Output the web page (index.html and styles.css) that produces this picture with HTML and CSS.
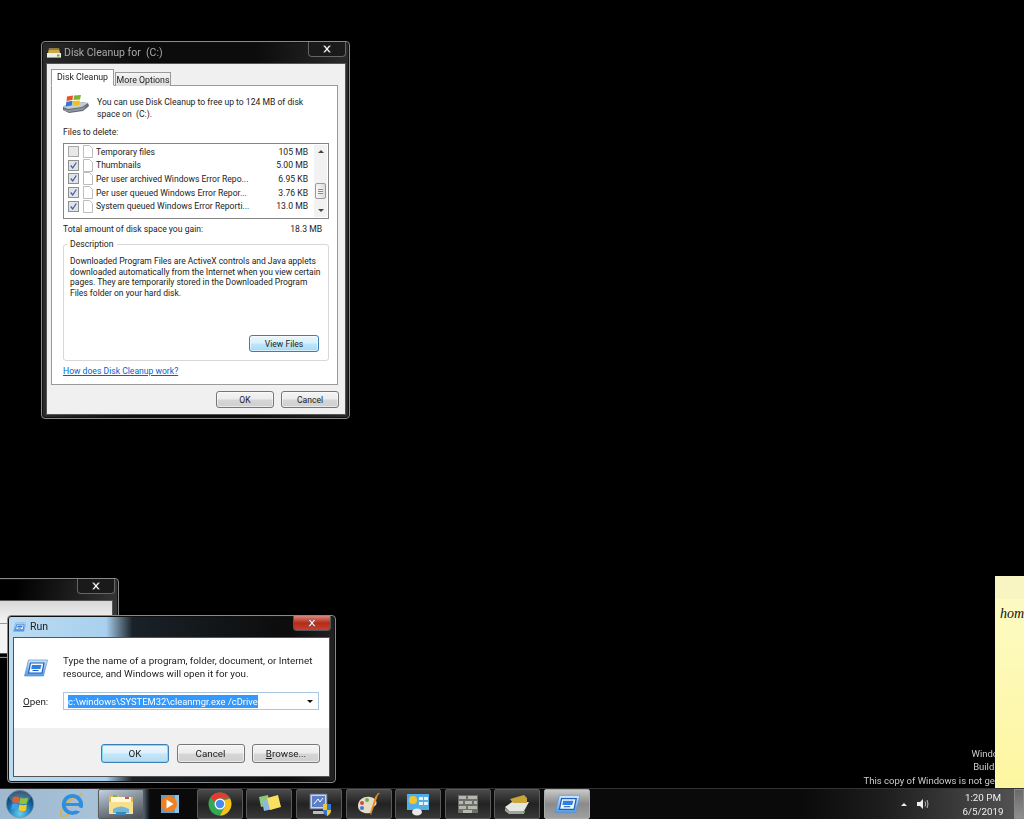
FILE: index.html
```html
<!DOCTYPE html>
<html lang="en">
<head>
<meta charset="utf-8">
<title>Windows 7 desktop</title>
<link rel="stylesheet" href="styles.css">
</head>
<body>
<svg class="defs" width="0" height="0" aria-hidden="true">
  <defs>
    <linearGradient id="runG" x1="0" y1="0" x2="0" y2="1"><stop offset="0" stop-color="#cfe6fb"/><stop offset="1" stop-color="#4f9be6"/></linearGradient>
    <symbol id="run-icon" viewBox="0 0 24 18">
      <path d="M5 1H24L20 17H1Z" fill="url(#runG)" stroke="#5f93c9" stroke-width=".7"/>
      <path d="M7 4H20.5L18.5 14H5Z" fill="#f4f9ff" stroke="#1f5fb8" stroke-width="1.2"/>
      <path d="M8.5 6H18L16.8 10H7.7Z" fill="#2f7fe0"/>
      <path d="M9 11.5H15" stroke="#1f5fb8"/>
    </symbol>
    <symbol id="close-x" viewBox="0 0 10 8">
      <path d="M1 .5H3L5 2.7 7 .5H9L6 4 9 7.5H7L5 5.3 3 7.5H1L4 4Z" fill="#fff" stroke="#333" stroke-width=".4"/>
    </symbol>
    <symbol id="file" viewBox="0 0 10 13">
      <path d="M.5.5H6.5L9.5 3.5V12.5H.5Z" fill="#fff" stroke="#bcbcbc"/>
    </symbol>
    <symbol id="check" viewBox="0 0 11 11">
      <rect x=".5" y=".5" width="10" height="10" fill="#dfe3ea" stroke="#8e8f8f"/>
      <path d="M2.7 5.5 4.7 8 8.3 2.5" fill="none" stroke="#4a5f97" stroke-width="1.3"/>
    </symbol>
  </defs>
</svg>

<main class="desktop">
  <section class="window window-back">
    <div class="titlebar"><span class="close close-dark close-back"><svg class="x"><use href="#close-x"/></svg></span></div>
    <div class="client back-client"></div>
  </section>

  <section class="window window-disk">
    <header class="titlebar">
      <svg class="title-icon" viewBox="0 0 14 12">
        <path d="M2 1H12L13 6H1Z" fill="#c9a94a"/>
        <path d="M2 1H12V3H2Z" fill="#8a7a3c"/>
        <path d="M0 6H14V11H0Z" fill="#eeeee8"/>
        <path d="M0 10H14V11H0Z" fill="#9a9a94"/>
        <path d="M10 7.500H12.500V9.500H10Z" fill="#5fb04a"/>
      </svg>
      <h1 class="title">Disk Cleanup for  (C:)</h1>
      <span class="close close-dark"><svg class="x"><use href="#close-x"/></svg></span>
    </header>
    <div class="client disk-client">
      <nav class="tabs">
        <span class="tab tab-active">Disk Cleanup</span>
        <span class="tab">More Options</span>
      </nav>
      <div class="panel">
        <div class="intro">
          <svg class="drive" viewBox="0 0 26 18">
            <path d="M0 12 8 6 25 8 26 11 20 16 6 18 0 15Z" fill="#5f6870"/>
            <path d="M0 12 8 6 25 8 19 12 5 14Z" fill="#c4ccd2"/>
            <path d="M1 14 5 15 19 13 24 10 20 15 6 17 1 15.500Z" fill="#8d969e"/>
            <path d="M4 1.500 10 .5 9.500 5 3.500 6Z" fill="#e2562a"/>
            <path d="M11 .5 18 0 17 4.500 10.500 5Z" fill="#7cb530"/>
            <path d="M3.300 6.800 9.300 6 8.800 10.500 2.800 11.500Z" fill="#2f78d8"/>
            <path d="M10.300 6 17 5.500 16 10 9.800 10.500Z" fill="#f0c020"/>
          </svg>
          <p class="intro-text">You can use Disk Cleanup to free up to 124 MB of disk<br>space on  (C:).</p>
        </div>
        <div class="label-files">Files to delete:</div>
        <div class="listbox">
          <ul class="rows">
            <li class="row"><span class="box-empty"></span><svg class="file"><use href="#file"/></svg><span class="row-name">Temporary files</span><span class="row-size">105 MB</span></li>
            <li class="row"><svg class="box"><use href="#check"/></svg><svg class="file"><use href="#file"/></svg><span class="row-name">Thumbnails</span><span class="row-size">5.00 MB</span></li>
            <li class="row"><svg class="box"><use href="#check"/></svg><svg class="file"><use href="#file"/></svg><span class="row-name">Per user archived Windows Error Repo...</span><span class="row-size">6.95 KB</span></li>
            <li class="row"><svg class="box"><use href="#check"/></svg><svg class="file"><use href="#file"/></svg><span class="row-name">Per user queued Windows Error Repor...</span><span class="row-size">3.76 KB</span></li>
            <li class="row"><svg class="box"><use href="#check"/></svg><svg class="file"><use href="#file"/></svg><span class="row-name">System queued Windows Error Reporti...</span><span class="row-size">13.0 MB</span></li>
          </ul>
          <div class="scrollbar">
            <span class="arrow-up"></span>
            <span class="thumb"></span>
            <span class="arrow-down"></span>
          </div>
        </div>
        <div class="total"><span>Total amount of disk space you gain:</span><span>18.3 MB</span></div>
        <fieldset class="group">
          <legend class="legend">Description</legend>
          <p class="desc">Downloaded Program Files are ActiveX controls and Java applets<br>downloaded automatically from the Internet when you view certain<br>pages. They are temporarily stored in the Downloaded Program<br>Files folder on your hard disk.</p>
          <div class="group-foot"><button class="btn btn-focus btn-view">View Files</button></div>
        </fieldset>
        <a class="link" href="#">How does Disk Cleanup work?</a>
      </div>
      <div class="actions disk-actions">
        <button class="btn btn-disk">OK</button>
        <button class="btn btn-disk">Cancel</button>
      </div>
    </div>
  </section>

  <section class="window window-run">
    <header class="titlebar titlebar-run">
      <svg class="run-title-icon"><use href="#run-icon"/></svg>
      <h1 class="title title-run">Run</h1>
      <span class="close close-red"><svg class="x"><use href="#close-x"/></svg></span>
    </header>
    <div class="client run-client">
      <div class="run-body">
        <div class="run-intro">
          <svg class="run-icon"><use href="#run-icon"/></svg>
          <p class="run-text">Type the name of a program, folder, document, or Internet<br>resource, and Windows will open it for you.</p>
        </div>
        <div class="run-open">
          <label class="run-label"><u>O</u>pen:</label>
          <div class="combo"><span class="combo-text">c:\windows\SYSTEM32\cleanmgr.exe /cDrive</span><span class="combo-arrow"></span></div>
        </div>
      </div>
      <div class="actions run-actions">
        <button class="btn btn-run btn-focus-soft">OK</button>
        <button class="btn btn-run">Cancel</button>
        <button class="btn btn-run"><u>B</u>rowse...</button>
      </div>
    </div>
  </section>

  <div class="watermark">
    <div>Windows 7</div>
    <div>Build 7601</div>
    <div>This copy of Windows is not genuine</div>
  </div>

  <aside class="sticky">
    <div class="sticky-head"></div>
    <div class="sticky-body">hom</div>
  </aside>
</main>

<footer class="taskbar">
  <svg class="orb" viewBox="0 0 30 30">
    <defs><radialGradient id="orbG" cx=".5" cy=".85" r=".8"><stop offset="0" stop-color="#63d0f2"/><stop offset=".55" stop-color="#1670ae"/><stop offset="1" stop-color="#0c2f52"/></radialGradient></defs>
    <circle cx="15" cy="15" r="13.700" fill="url(#orbG)" stroke="#7e97ad" stroke-width=".6"/>
    <ellipse cx="15" cy="8" rx="11" ry="6.500" fill="#fff" opacity=".2"/>
    <path d="M8 8.500Q11 6.500 14.300 8.500L13.500 14Q10.500 12.500 7.300 14Z" fill="#ea5a2c"/>
    <path d="M15.300 8.800Q19 10.500 23 8.500L22 14.500Q18 16 14.500 14.500Z" fill="#8cc33f"/>
    <path d="M7 15Q10 13.500 13.300 15.200L12.500 20.800Q9.500 19 6.300 20.500Z" fill="#3ba0e6"/>
    <path d="M14.300 15.500Q18 17 21.800 15.500L21 21.500Q17 23 13.500 21Z" fill="#f8c824"/>
  </svg>
  <svg class="ie" viewBox="0 0 28 28">
    <path d="M24 2C26 5 20 4 13 9 5 15 1 23 4 26 7 27 11 24 12 23" fill="none" stroke="#e8b030" stroke-width="1.6"/>
    <circle cx="15" cy="14" r="9" fill="none" stroke="#2f8fdc" stroke-width="4"/>
    <path d="M8 14H23" stroke="#2f8fdc" stroke-width="3"/>
    <path d="M19 18 25 20" stroke="#a8c2d8" stroke-width="4"/>
  </svg>
  <button class="task task-hot">
    <svg class="task-icon" viewBox="0 0 26 24">
      <path d="M1 3H10L12 5H25V21H1Z" fill="#e2b94a"/>
      <path d="M3 5H23V10H3Z" fill="#fff8d8"/>
      <path d="M5 3H9V5H5Z" fill="#7fb24a"/><path d="M17 5H21V7H17Z" fill="#d9534a"/>
      <path d="M1 10H25V22H1Z" fill="#f7e08c"/>
      <path d="M5 17Q13 12 21 17V21H5Z" fill="#6fb6dc"/><path d="M8 20H18V23H8Z" fill="#3d86b6"/>
    </svg>
  </button>
  <span class="task task-plain">
    <svg class="task-icon" viewBox="0 0 24 24">
      <path d="M3 3H21V21H3Z" fill="#5d9fc9"/><path d="M17 3H21V21H17Z" fill="#8fc3df"/>
      <circle cx="11" cy="12" r="8" fill="#f08020"/><path d="M8.500 7.500 15.500 12 8.500 16.500Z" fill="#fff"/>
    </svg>
  </span>
  <button class="task">
    <svg class="task-icon task-chrome" viewBox="0 0 24 24">
      <circle cx="12" cy="12" r="11.500" fill="#34a853"/>
      <path d="M12 .5A11.500 11.500 0 0 1 22 6.500H12A5.500 5.500 0 0 0 6.800 10L2.500 5.500A11.500 11.500 0 0 1 12 .5Z" fill="#e53b30"/>
      <path d="M22 6.500A11.500 11.500 0 0 1 12 23.500L17 14.500A5.500 5.500 0 0 0 16 8.500Z" fill="#fbc116"/>
      <circle cx="12" cy="12" r="5.500" fill="#fff"/><circle cx="12" cy="12" r="4.200" fill="#4a8bf0"/>
    </svg>
  </button>
  <button class="task">
    <svg class="task-icon" viewBox="0 0 26 24">
      <path d="M3 5 12 3 14 13 5 15Z" fill="#8cc77a"/>
      <path d="M6 9 15 7 17 17 8 19Z" fill="#8fb8e0"/>
      <path d="M11 6 22 3 25 15 14 18Z" fill="#f8e060"/>
    </svg>
  </button>
  <button class="task">
    <svg class="task-icon" viewBox="0 0 26 24">
      <path d="M4 2H21V17H4Z" fill="#c9d4e8" stroke="#58627a"/><path d="M6 4H19V15H6Z" fill="#5d7fc7"/><path d="M8 12 12 7 14 10 17 6" fill="none" stroke="#fff"/>
      <path d="M7 19H18V22H7Z" fill="#b8bcc4"/>
      <path d="M17 12H25V18Q25 22 21 24 17 22 17 18Z" fill="#2f78d8"/><path d="M17 12H21V18H17ZM21 18H25Q25 22 21 24Z" fill="#f4c430"/>
    </svg>
  </button>
  <button class="task">
    <svg class="task-icon" viewBox="0 0 26 24">
      <path d="M2 14C2 7 9 4 14 5 21 6 22 12 19 14 16 15 16 17 16 19 15 23 2 22 2 14Z" fill="#e6dcc8"/>
      <circle cx="6" cy="11" r="2" fill="#d9483a"/><circle cx="11" cy="8" r="2" fill="#6ab04a"/><circle cx="6" cy="16" r="2" fill="#3c7fd0"/>
      <path d="M24 1 22 3 15 23 14 21 19 5 22 1Z" fill="#e88b20"/>
    </svg>
  </button>
  <button class="task">
    <svg class="task-icon" viewBox="0 0 26 24">
      <path d="M2 2H24V18H2Z" fill="#53aee6"/>
      <circle cx="8" cy="8" r="4" fill="#f4c430"/>
      <path d="M14 5H18V8H14ZM19 5H23V8H19ZM14 10H18V13H14ZM19 10H23V13H19Z" fill="#e4f2fc"/>
      <ellipse cx="12" cy="20" rx="5" ry="3.500" fill="#e8e8e8"/>
    </svg>
  </button>
  <button class="task">
    <svg class="task-icon" viewBox="0 0 26 24">
      <path d="M3 3H23V21H3Z" fill="#6c7068"/>
      <path d="M4 4H11V7H4ZM13 4H22V7H13ZM4 9H8V12H4ZM10 9H17V12H10ZM19 9H22V12H19ZM4 14H11V17H4ZM13 14H22V17H13ZM8 18H17V21H8Z" fill="#b4b8ae"/>
    </svg>
  </button>
  <button class="task">
    <svg class="task-icon" viewBox="0 0 26 24">
      <path d="M1 15 8 10H25L20 19H5Z" fill="#e4e6e2"/>
      <path d="M1 16 5 19H20V22H5L1 19Z" fill="#9ea39c"/>
      <path d="M6 7 20 3 23 6V11H9Z" fill="#c9a63c"/>
      <path d="M19 19H21V21H19Z" fill="#4fb04a"/>
    </svg>
  </button>
  <button class="task task-active"><svg class="task-icon"><use href="#run-icon"/></svg></button>
  <div class="tray">
    <span class="tray-arrow"></span>
    <svg class="speaker" viewBox="0 0 12 12"><path d="M0 4H3L6 1V11L3 8H0Z" fill="#eee"/><path d="M8 3.500Q9.500 6 8 8.500M10 2Q12 6 10 10" fill="none" stroke="#bbb"/></svg>
    <div class="clock"><div>1:20 PM</div><div>6/5/2019</div></div>
    <span class="show-desktop"></span>
  </div>
</footer>
</body>
</html>
```
FILE: styles.css
```css
* { box-sizing: border-box; }
html, body { margin: 0; height: 100%; }
body {
  display: flex;
  flex-direction: column;
  width: 1024px;
  height: 819px;
  overflow: hidden;
  background: #000;
  font-family: Roboto, "Liberation Sans", sans-serif;
  font-size: 8.600px;
  color: #222;
}
.defs { position: absolute; }
h1, p, ul { margin: 0; padding: 0; }
ul { list-style: none; }

.desktop { position: relative; flex: 1; overflow: hidden; filter: blur(.35px); }

.window {
  position: absolute;
  display: flex;
  flex-direction: column;
  border: 1px solid #8a8a8a;
  border-radius: 4px;
  box-shadow: 0 0 0 1px #111 inset;
  background: linear-gradient(90deg, #2a2a2a, #0c0c0c 30%, #0c0c0c 70%, #2a2a2a);
  padding: 0 3px 3px 4px;
}
.window-disk { left: 41px; top: 41px; width: 309px; height: 378px; }
.window-back {
  left: -60px; top: 578px; width: 179px; height: 80px; padding-right: 5px;
  background: linear-gradient(100deg, #000 40%, #3a3a3a);
}
.window-run {
  left: 7px; top: 615px; width: 329px; height: 168px;
  padding: 0 5px 5px 5px;
  background: linear-gradient(90deg, #bcdcf2, #a9d0ee 30%, #1a2228 38%, #0c0c0c 85%, #222);
}

.titlebar { position: relative; display: flex; align-items: center; height: 21px; flex: none; padding-left: 1px; }
.titlebar-run { height: 21px; padding-left: 0; }
.title-icon { width: 14px; height: 12px; margin-right: 3px; }
.title { font-size: 10.500px; font-weight: 400; color: #a8a8a8; white-space: pre; }
.title-run { color: #222; margin-left: 4px; }
.run-title-icon { width: 13px; height: 10px; }

.close {
  position: absolute;
  top: 0;
  right: 0;
  width: 38px;
  height: 15px;
  display: flex;
  align-items: center;
  justify-content: center;
  border-radius: 0 0 4px 4px;
}
.close-dark { background: #1a1a1a; border: 1px solid #666; border-top: 0; }
.close-back { right: -2px; }
.close-red { right: -1px; background: linear-gradient(#d8867a, #b52a1c 50%, #c8402e); border: 1px solid #555; border-top: 0; }
.x { width: 10px; height: 8px; }

.client { flex: 1; background: #f0f0f0; border: 1px solid #555; }
.back-client {
  position: relative;
  background: linear-gradient(#d8d8d8, #f4f4f4 22px, #999 22px, #999 23px, #f4f4f4 23px);
}
.back-client::after {
  content: "";
  position: absolute;
  left: 63px;
  top: 39px;
  width: 3px;
  height: 6px;
  background: #555;
}

.disk-client { display: flex; flex-direction: column; padding: 5px 7px 0 4px; }
.tabs { display: flex; align-items: flex-end; height: 17px; margin-bottom: -1px; position: relative; z-index: 1; }
.tab {
  height: 14px;
  width: 56px;
  margin-left: 1px;
  text-align: center;
  line-height: 14px;
  font-size: 8.800px;
  white-space: nowrap;
  background: linear-gradient(#f4f4f4, #dcdcdc);
  border: 1px solid #9a9a9a;
  border-bottom: 0;
}
.tab-active { width: 63px; height: 17px; line-height: 15px; background: #fff; margin-left: 0; border-bottom: 1px solid #fff; }
.panel {
  height: 300px;
  background: #fff;
  border: 1px solid #9a9a9a;
  padding: 10px 8px 0 11px;
  display: flex;
  flex-direction: column;
}
.intro { display: flex; align-items: flex-start; height: 30px; }
.drive { width: 26px; height: 18px; margin: -1px 8px 0 0; }
.intro-text { line-height: 12px; white-space: pre; }
.label-files { line-height: 12px; margin-bottom: 5px; }
.listbox { display: flex; height: 76px; width: 266px; border: 1px solid #848484; background: #fff; padding: 1px; }
.rows { flex: 1; min-width: 0; }
.row { display: flex; align-items: center; height: 13.6px; padding-left: 3px; white-space: nowrap; }
.box, .box-empty { width: 11px; height: 11px; flex: none; margin-right: 4px; }
.box-empty { border: 1px solid #a8a8a8; background: #e8e8e8; }
.file { width: 10px; height: 13px; flex: none; margin-right: 3px; }
.row-name { flex: 1; min-width: 0; }
.row-size { margin-right: 6px; }
.scrollbar { position: relative; flex: none; width: 13px; background: #f2f2f2; display: flex; flex-direction: column; align-items: center; justify-content: space-between; padding: 5px 0; }
.arrow-up, .arrow-down, .combo-arrow, .tray-arrow { width: 0; height: 0; border-left: 3px solid transparent; border-right: 3px solid transparent; }
.arrow-up { border-bottom: 3px solid #444; }
.arrow-down { border-top: 3px solid #444; }
.thumb { position: absolute; left: 1px; top: 38px; width: 11px; height: 16px; background: repeating-linear-gradient(#f4f4f4 0 1px, #888 1px 2px) center / 5px 6px no-repeat, linear-gradient(90deg, #f8f8f8, #dcdcdc); border: 1px solid #9a9a9a; border-radius: 2px; }
.total { display: flex; justify-content: space-between; width: 266px; padding: 0 7px 0 0; margin-top: 3px; line-height: 14px; }
.group { margin: 2px 0 0; min-width: 0; width: 266px; height: 123px; padding: 0 9px 0 6px; border: 1px solid #d8d8d8; border-radius: 3px; }
.legend { padding: 0 3px; line-height: 12px; margin-left: -3px; }
.desc { font-size: 8.500px; line-height: 10.500px; height: 85px; padding-top: 6px; white-space: nowrap; }
.group-foot { display: flex; justify-content: flex-end; }
.link { margin-top: 4px; line-height: 12px; color: #0066cc; }

.btn {
  font: inherit;
  color: #222;
  padding: 0;
  border: 1px solid #777;
  border-radius: 3px;
  background: linear-gradient(#f4f4f4, #ececec 48%, #d6d6d6 52%, #cfcfcf);
  box-shadow: inset 0 0 0 1px #fff8;
}
.btn-view { width: 70px; height: 17px; }
.btn-focus { border-color: #3c7fb1; background: linear-gradient(#eaf6fd, #d9f0fc 48%, #bee6fd 52%, #a7d9f5); }
.btn-focus-soft { border-color: #3c7fb1; box-shadow: inset 0 0 0 1px #7fdcf5; background: linear-gradient(#eef8fd, #dff0fa 48%, #c4e6f8 52%, #b4dcf2); }
.actions { display: flex; justify-content: flex-end; }
.disk-actions { gap: 7px; padding-top: 6px; margin-right: -1px; }
.btn-disk { width: 58px; height: 17px; }

.run-client { display: flex; flex-direction: column; }
.run-body { flex: 1; background: #fff; padding: 17px 10px 0 9px; }
.run-intro { display: flex; align-items: flex-start; }
.run-icon { width: 25px; height: 18px; margin: 4px 15px 0 0; }
.run-text { font-size: 9.800px; line-height: 12.500px; white-space: pre; }
.run-open { display: flex; align-items: center; margin-top: 12px; }
.run-label { width: 40px; font-size: 9.800px; padding-top: 1px; }
.combo { flex: 1; height: 18px; display: flex; align-items: center; justify-content: space-between; border: 1px solid #abc7e0; padding: 0 5px 0 4px; font-size: 9.400px; background: #fff; }
.combo-text { background: #3399ff; color: #fff; line-height: 13px; white-space: nowrap; }
.combo-arrow { border-top: 3px solid #111; }
.run-actions { flex: none; height: 48px; gap: 7.500px; padding: 16px 9px 0 0; background: #f0f0f0; }
.btn-run { width: 68px; height: 19px; font-size: 9.800px; }

.watermark {
  position: absolute;
  right: 6px;
  bottom: 1px;
  text-align: right;
  font-size: 9.500px;
  line-height: 13.500px;
  color: #ccc;
  white-space: nowrap;
}
.sticky {
  position: absolute;
  left: 995px;
  top: 576px;
  width: 29px;
  bottom: 0;
  overflow: hidden;
  background: linear-gradient(#fdfbc6, #fdf6a0);
}
.sticky-head { height: 23px; background: #f8f5c3; }
.sticky-body { padding: 7px 0 0 5px; font: italic 14px "Liberation Serif", serif; color: #111; }

.taskbar {
  flex: none;
  height: 31px;
  display: flex;
  align-items: center;
  position: relative;
  padding-left: 5px;
  gap: 3.600px;
  background: linear-gradient(90deg, #9db8cf 0, #a8c2d8 95px, #5a6a78 143px, #0a0a0a 150px, #0a0a0a 800px, #1c1c1c 880px, #555 1024px);
  border-top: 1px solid #333;
  filter: blur(.3px);
}
.orb { width: 30px; height: 30px; flex: none; }
.ie { width: 27px; height: 27px; flex: none; margin: 0 9.400px 0 19px; }
.task {
  flex: none;
  width: 46px;
  height: 30px;
  padding: 0;
  display: flex;
  align-items: center;
  justify-content: center;
  border: 1px solid #5a5a5a;
  border-radius: 2px;
  background: linear-gradient(#4a4a4a, #222 50%, #383838);
}
.task-hot { background: linear-gradient(rgba(255,255,255,.35), rgba(60,60,60,.6)); }
.task-plain { background: none; border-color: transparent; }
.task-active { background: linear-gradient(#c8c8c8, #8a8a8a 50%, #a0a0a0); border-color: #aaa; }
.task-icon { width: 26px; height: 24px; }
.tray { display: flex; align-items: center; margin-left: auto; height: 100%; color: #eee; }
.tray-arrow { border-bottom: 3px solid #eee; margin-right: 10px; }
.speaker { width: 12px; height: 12px; margin-right: 23px; }
.clock { width: 62px; padding-top: 1px; text-align: center; font-size: 9.800px; line-height: 14px; }
.show-desktop { width: 10px; height: 100%; background: linear-gradient(#6a6a6a, #8f8f8f); border: 1px solid #888; }

u { text-underline-offset: 1px; }
```
